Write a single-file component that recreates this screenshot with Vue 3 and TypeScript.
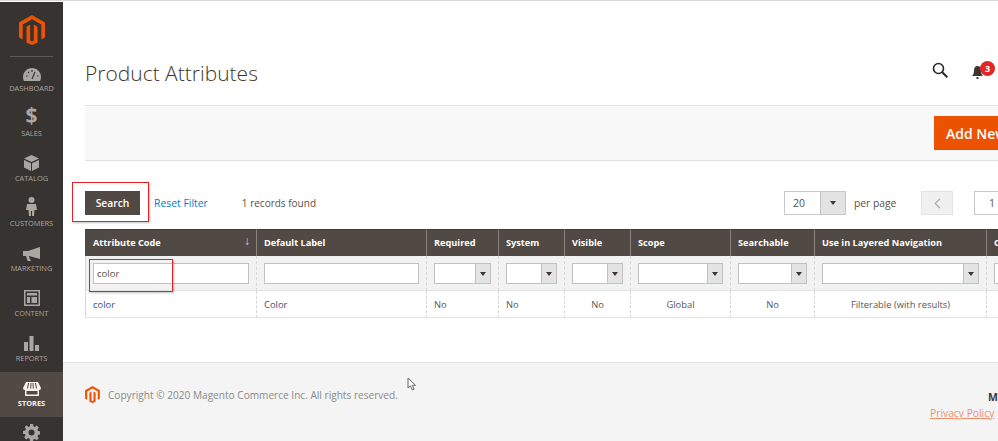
<script setup lang="ts">
interface Col { label: string; width: number; filter: 'text' | 'select' | 'none'; value: string; align?: string; link?: boolean; sorted?: boolean; val?: string }
const cols: Col[] = [
  { label: 'Attribute Code', width: 171, filter: 'text', value: 'color', link: true, sorted: true, val: 'color' },
  { label: 'Default Label', width: 170, filter: 'text', value: 'Color', link: true, val: '' },
  { label: 'Required', width: 72, filter: 'select', value: 'No' },
  { label: 'System', width: 66, filter: 'select', value: 'No' },
  { label: 'Visible', width: 66, filter: 'select', value: 'No', align: 'center' },
  { label: 'Scope', width: 100, filter: 'select', value: 'Global', align: 'center' },
  { label: 'Searchable', width: 84, filter: 'select', value: 'No', align: 'center' },
  { label: 'Use in Layered Navigation', width: 172, filter: 'select', value: 'Filterable (with results)', align: 'center' },
  { label: 'Comparable', width: 90, filter: 'select', value: '' },
]
const gridTemplate = cols.map(c => c.width + 'px').join(' ')
const nav = ['Dashboard', 'Sales', 'Catalog', 'Customers', 'Marketing', 'Content', 'Reports', 'Stores', 'System']
</script>

<template>
  <div class="page">
    <aside class="side">
      <div class="logo">
        <svg width="26" height="30" viewBox="0 0 26 30"><path fill="#eb5202" d="M13 0 26 7.500V22.500L22.300 24.600V9.600L13 4.300 3.700 9.600V24.600L0 22.500V7.500ZM11.200 9.500V25.500L13 26.600 14.800 25.500V9.500L18.500 11.700V27.700L13 30 7.500 27.700V11.700Z"/></svg>
      </div>
      <nav class="nav">
        <div v-for="n in nav" :key="n" class="item" :class="{ active: n === 'Stores' }">
          <div class="ico">
            <svg v-if="n === 'Dashboard'" width="18" height="13" viewBox="0 0 18 13"><path fill="#aaa6a0" d="M9 0C4 0 0 4 0 9c0 1.500.4 2.900 1 4h16c.6-1.100 1-2.500 1-4 0-5-4-9-9-9Z"/><path stroke="#3a3633" stroke-width="1.200" d="M9 11 12 4M3 8h1.500M5 4l1 1M9 2v2M14 8h1.500"/></svg>
            <span v-else-if="n === 'Sales'" class="dollar">$</span>
            <svg v-else-if="n === 'Catalog'" width="15" height="16" viewBox="0 0 15 16"><path fill="#aaa6a0" d="M7.500 0 15 3.500 7.500 7 0 3.500ZM0 5l7 3.200V16L0 12.500ZM15 5 8 8.200V16l7-3.500Z"/></svg>
            <svg v-else-if="n === 'Customers'" width="11" height="19" viewBox="0 0 11 19"><circle cx="5.500" cy="3" r="3" fill="#aaa6a0"/><path fill="#aaa6a0" d="M1 7h9l1 6H8.500L8 19H6V14H5v5H3L2.500 13H0Z"/></svg>
            <svg v-else-if="n === 'Marketing'" width="17" height="14" viewBox="0 0 17 14"><path fill="#aaa6a0" d="M17 0v12L6 9v1l2 4H4.500L3 9H0V4h5Z"/></svg>
            <svg v-else-if="n === 'Content'" width="16" height="16" viewBox="0 0 16 16"><path fill="#aaa6a0" fill-rule="evenodd" d="M0 0h16v16H0ZM1.500 1.500v13h13v-13ZM3 3h10v2.500H3ZM3 7h3v6H3ZM7.500 7H13v6H7.500Z"/></svg>
            <svg v-else-if="n === 'Reports'" width="15" height="15" viewBox="0 0 15 15"><path fill="#aaa6a0" d="M0 6h4v9H0ZM5.500 0h4v15h-4ZM11 9h4v6h-4Z"/></svg>
            <svg v-else-if="n === 'Stores'" width="18" height="14" viewBox="0 0 18 14"><path fill="#f7f3eb" d="M3 0h12l3 6c0 1.300-1 2-2 2v6H2V8C1 8 0 7.300 0 6Z"/><path stroke="#514943" stroke-width="1" d="M5.500 1 4.500 6.500M8 1 7.700 6.500M10 1l.3 5.500M12.500 1l1 5.500" fill="none"/><path fill="#514943" d="M3.500 9h11v3.500h-11Z"/></svg>
            <svg v-else width="17" height="17" viewBox="0 0 17 17"><path fill="#aaa6a0" fill-rule="evenodd" d="M7 0h3l.4 2.300 1.500.6L13.800 1.600l2 2-1.300 1.900.6 1.500 2.300.4v3l-2.300.4-.6 1.500 1.300 1.900-2 2-1.900-1.300-1.500.6L10 17H7l-.4-2.300-1.500-.6-1.900 1.300-2-2 1.300-1.900-.6-1.500L0 10V7l2.300-.4.6-1.500L1.600 3.200l2-2L5.500 2.900 7 2.300ZM8.500 5.500a3 3 0 1 0 0 6 3 3 0 0 0 0-6Z"/></svg>
          </div>
          <div class="lbl">{{ n }}</div>
        </div>
      </nav>
    </aside>

    <main class="main">
      <header class="head">
        <h1>Product Attributes</h1>
        <div class="tools">
          <svg class="search" width="16" height="16" viewBox="0 0 16 16"><circle cx="6.500" cy="6.500" r="5" fill="none" stroke="#2a2a2a" stroke-width="1.600"/><path d="m10.300 10.300 5 5" stroke="#2a2a2a" stroke-width="2"/></svg>
          <div class="bell">
            <svg width="11" height="13" viewBox="0 0 11 13"><path fill="#41362f" d="M5.500 0C3 0 2 2 2 4.500 2 7.500 1 9 0 10h11c-1-1-2-2.500-2-5.500C9 2 8 0 5.500 0ZM4.500 11h2v2h-2Z"/></svg>
            <span class="badge">3</span>
          </div>
        </div>
      </header>

      <section class="actions"><button class="add">Add New Attribute</button></section>

      <section class="toolbar">
        <button class="btn-search">Search</button>
        <a class="reset">Reset Filter</a>
        <span class="records">1 records found</span>
        <div class="pager">
          <div class="per"><span class="per-val">20</span><span class="sel-btn big"><i></i></span></div>
          <span class="per-label">per page</span>
          <button class="prev"><svg width="7" height="11" viewBox="0 0 7 11"><path d="M6 .8 1.200 5.500 6 10.200" fill="none" stroke="#adadad" stroke-width="1.200"/></svg></button>
          <div class="page-box">1</div>
        </div>
      </section>

      <div class="grid" :style="{ gridTemplateColumns: gridTemplate }">
        <div v-for="c in cols" :key="c.label" class="th">
          {{ c.label }}<span v-if="c.sorted" class="arrow">↓</span>
        </div>
        <div v-for="c in cols" :key="c.label + 'f'" class="tf">
          <div v-if="c.filter === 'text'" class="input">{{ c.val }}</div>
          <div v-else class="select"><span class="sel-btn"><i></i></span></div>
        </div>
        <div v-for="c in cols" :key="c.label + 'd'" class="td" :class="{ link: c.link, center: c.align === 'center' }">{{ c.value }}</div>
      </div>

      <footer class="foot">
        <div class="copy">
          <svg width="15" height="17" viewBox="0 0 26 30"><path fill="#eb5202" d="M13 0 26 7.500V22.500L22.300 24.600V9.600L13 4.300 3.700 9.600V24.600L0 22.500V7.500ZM11.200 9.500V25.500L13 26.600 14.800 25.500V9.500L18.500 11.700V27.700L13 30 7.500 27.700V11.700Z"/></svg>
          <span>Copyright © 2020 Magento Commerce Inc. All rights reserved.</span>
        </div>
        <div class="legal">
          <strong>Magento ver. 2.3.4</strong>
          <a>Privacy Policy</a>
        </div>
      </footer>
    </main>

    <div class="mark mark-a"></div>
    <div class="mark mark-b"></div>
    <svg class="cursor" width="10" height="14" viewBox="0 0 10 14"><path d="M1 1v10l2.500-2.200L5.300 13l1.800-.8L5.300 8.300H8.500Z" fill="#fff" stroke="#555" stroke-width=".9"/></svg>
  </div>
</template>

<style>
html, body { margin: 0; background: #fff; }
</style>

<style scoped>
.page { position: relative; width: 998px; height: 441px; overflow: hidden; display: flex; background: #fff; font-family: "Open Sans", sans-serif; color: #41362f; }
.page::before { content: ""; position: absolute; left: 0; right: 0; top: 0; height: 1px; background: #d8d8d8; }

.side { width: 63px; flex: none; margin-top: 2px; background: #373330; display: flex; flex-direction: column; }
.logo { flex: none; margin: 0 10px; padding-top: 13px; box-sizing: border-box; height: 55px; border-bottom: 1px solid #5f5a56; display: flex; justify-content: center; align-items: flex-start; }
.nav { display: flex; flex-direction: column; }
.item { height: 45px; flex: none; display: flex; flex-direction: column; align-items: center; }
.item.active { background: #514943; }
.ico { height: 25px; display: flex; align-items: flex-end; justify-content: center; padding-bottom: 1px; box-sizing: border-box; }
.dollar { font-size: 21px; line-height: 21px; font-weight: 700; color: #aaa6a0; }
.lbl { font-size: 7.400px; line-height: 12px; text-transform: uppercase; color: #aaa6a0; }
.item.active .lbl { color: #f7f3eb; font-weight: 700; }

.main { flex: 1; min-width: 0; padding-left: 22px; display: flex; flex-direction: column; }
.head { height: 105px; flex: none; display: flex; justify-content: space-between; width: 913px; box-sizing: border-box; }
.head h1 { margin: 52px 0 0; font-size: 21px; line-height: 42px; font-weight: 300; color: #41362f; height: 42px; }
.tools { display: flex; align-items: flex-start; padding-top: 62px; }
.search { margin-right: 24px; }
.bell { position: relative; width: 11px; margin-right: 15px; padding-top: 4px; }
.bell svg { display: block; }
.badge { position: absolute; left: 8px; top: -1px; width: 15px; height: 15px; border-radius: 50%; background: #e22626; color: #fff; font-size: 9px; font-weight: 700; line-height: 15px; text-align: center; }

.actions { height: 56px; width: 913px; flex: none; box-sizing: border-box; background: #f8f8f8; border-top: 1px solid #e3e3e3; border-bottom: 1px solid #e3e3e3; padding: 10px 0 0 849px; overflow: hidden; }
.add { height: 34px; width: 130px; border: 1px solid #eb5202; background: #eb5202; color: #fff; font-family: inherit; font-size: 14px; font-weight: 600; padding: 0 0 0 11px; text-align: left; white-space: nowrap; display: block; }

.toolbar { height: 68px; flex: none; width: 929px; display: flex; align-items: flex-start; padding-top: 30px; box-sizing: border-box; }
.btn-search { width: 55px; height: 24px; background: #514943; color: #fff; border: 1px solid #514943; font-family: inherit; font-size: 10.300px; font-weight: 600; padding: 0; }
.reset { margin-left: 14px; font-size: 10.400px; line-height: 24px; color: #007bdb; font-weight: 500; }
.records { margin-left: 34px; font-size: 10px; line-height: 24px; color: #5a5047; }
.pager { margin-left: auto; display: flex; align-items: center; height: 24px; }
.per { width: 62px; height: 24px; box-sizing: border-box; border: 1px solid #c8c8c8; display: flex; justify-content: space-between; background: #fff; }
.per-val { font-size: 10.500px; line-height: 22px; padding-left: 8px; color: #5a5047; }
.per-label { margin-left: 8px; width: 42px; white-space: nowrap; font-size: 10.300px; color: #5a5047; }
.prev { margin-left: 25px; width: 32px; height: 24px; border: 1px solid #e3e3e3; background: #f0f0f0; display: flex; align-items: center; justify-content: center; padding: 0; box-sizing: border-box; }
.page-box { margin-left: 21px; width: 40px; height: 24px; box-sizing: border-box; border: 1px solid #c8c8c8; font-size: 10.500px; line-height: 22px; padding-left: 14px; flex: none; color: #5a5047; }

.grid { display: grid; width: max-content; flex: none; }
.th { height: 27px; box-sizing: border-box; background: #514943; color: #fff; font-size: 9.200px; font-weight: 700; padding-left: 7px; border-left: 1px solid #8a837e; position: relative; white-space: nowrap; overflow: hidden; border-top: 1px solid #3f3a36; line-height: 25px; }
.th:first-child { border-left: 0; padding-left: 8px; }
.arrow { position: absolute; right: 6px; top: -2px; font-size: 12px; font-weight: 400; color: #d8d4d0; }
.tf { height: 35px; box-sizing: border-box; background: #f2f2f2; border-left: 1px dashed #d6d6d6; border-bottom: 1px solid #e3e3e3; padding: 7px 7px 0; }
.tf:nth-child(10) { border-left: 1px solid #d6d6d6; padding-left: 7px; }
.input { height: 21px; box-sizing: border-box; background: #fff; border: 1px solid #c2c2c2; font-size: 9.600px; line-height: 19px; padding-left: 3px; color: #5a5047; }
.select { height: 21px; box-sizing: border-box; background: #fff; border: 1px solid #c2c2c2; display: flex; justify-content: flex-end; }
.sel-btn { width: 14px; background: #e3e3e3; border-left: 1px solid #c2c2c2; display: flex; align-items: center; justify-content: center; flex: none; }
.sel-btn.big { width: 24px; }
.sel-btn i { width: 0; height: 0; border-left: 3px solid transparent; border-right: 3px solid transparent; border-top: 4px solid #41362f; display: block; }
.td { height: 27px; box-sizing: border-box; border-left: 1px dashed #d6d6d6; border-bottom: 1px solid #e3e3e3; font-size: 9.400px; line-height: 27px; padding-left: 7px; color: #5a5555; white-space: nowrap; overflow: hidden; }
.td:nth-child(19) { border-left: 1px solid #d6d6d6; padding-left: 7px; }
.td.link { color: #3d5080; }
.td.center { text-align: center; padding-left: 0; }

.foot { margin: 44px 0 0 -22px; padding: 0 0 0 22px; flex: 1; background: #f4f4f4; border-top: 1px solid #e3e3e3; display: flex; justify-content: space-between; width: 935px; box-sizing: border-box; position: relative; }
.copy { display: flex; align-items: center; height: 17px; margin-top: 23px; font-size: 10.100px; color: #8a8a8a; gap: 8px; white-space: nowrap; }
.legal { position: absolute; left: 867px; top: 27px; width: 120px; display: flex; flex-direction: column; white-space: nowrap; }
.legal strong { font-size: 10.500px; line-height: 14px; padding-left: 58px; font-weight: 700; color: #41362f; }
.legal a { margin-top: 2px; font-size: 10.300px; line-height: 14px; color: #f08d6d; text-decoration: underline; }

.mark { position: absolute; border: 1.500px solid #e81f25; box-shadow: 1px 1px 2px rgba(0, 0, 0, .25); box-sizing: border-box; }
.mark-a { left: 72px; top: 182px; width: 77px; height: 40px; }
.mark-b { left: 89px; top: 259px; width: 84px; height: 33px; }
.cursor { position: absolute; left: 407px; top: 377px; }
</style>
